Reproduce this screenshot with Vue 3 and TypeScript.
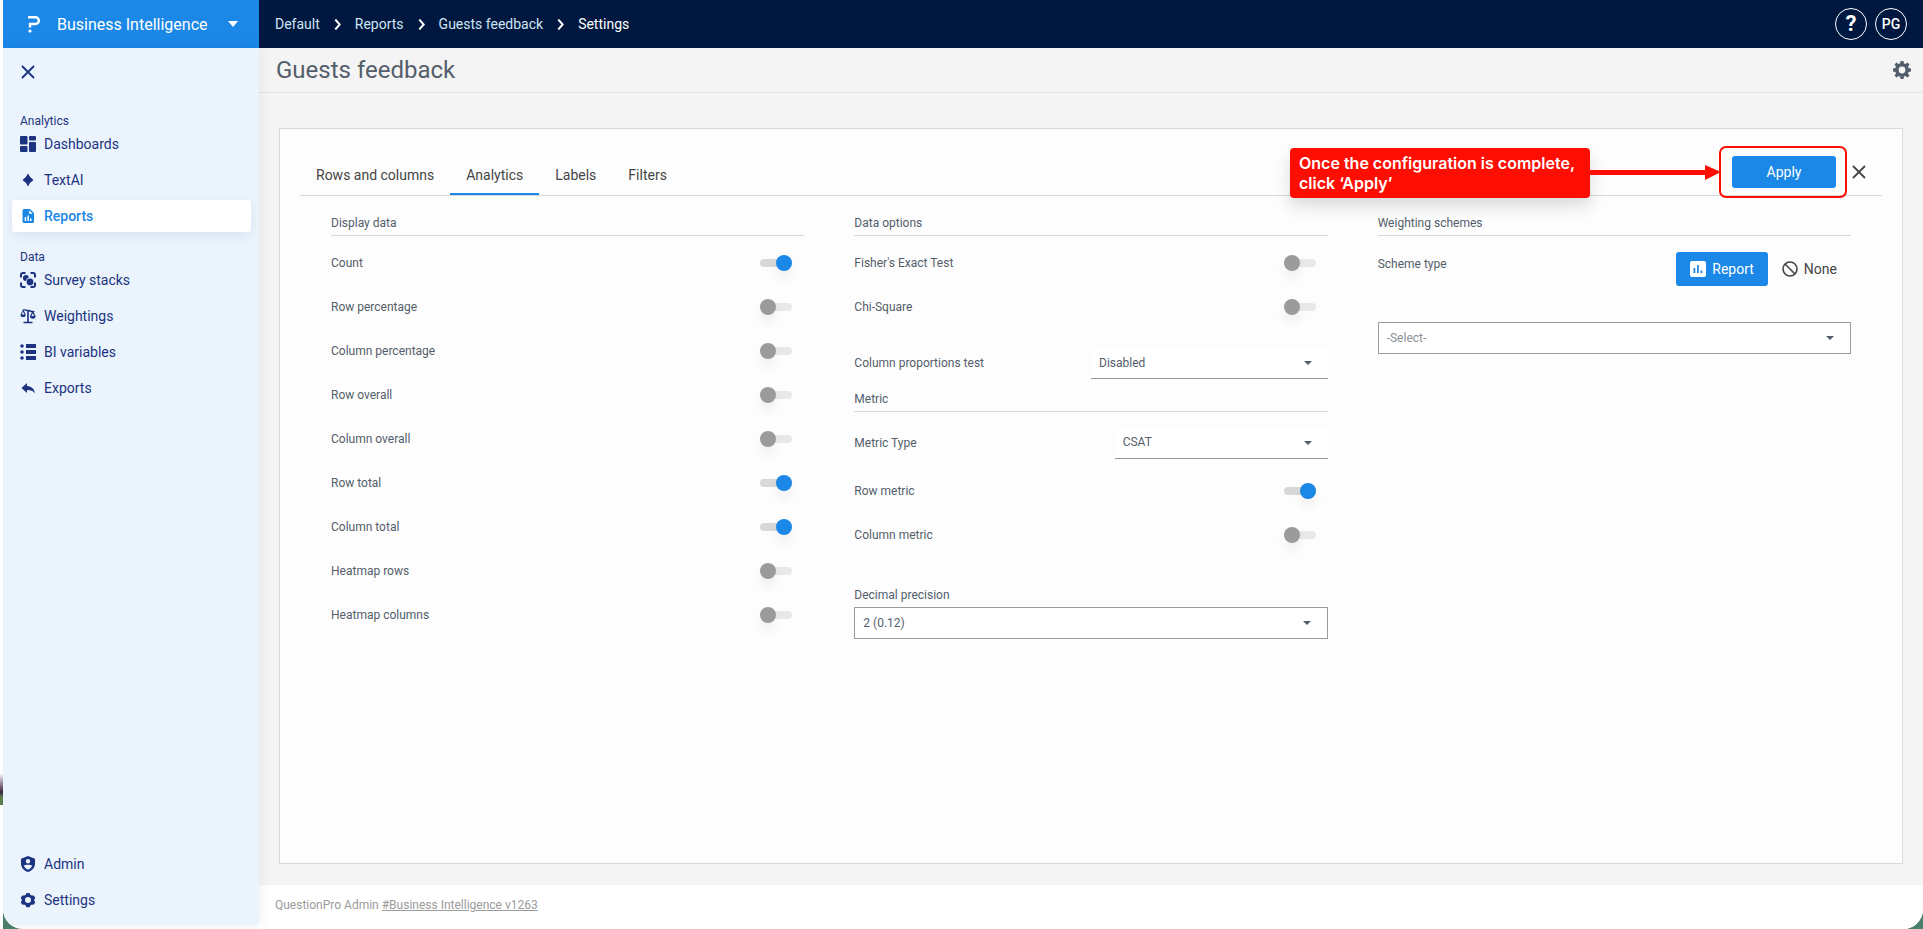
<script setup lang="ts">
import { reactive, ref } from 'vue'

interface NavItem { label: string; icon: string; active?: boolean }
interface Toggle { label: string; on: boolean }

const analyticsNav: NavItem[] = [
  { label: 'Dashboards', icon: 'dashboard' },
  { label: 'TextAI', icon: 'spark' },
  { label: 'Reports', icon: 'report', active: true },
]
const dataNav: NavItem[] = [
  { label: 'Survey stacks', icon: 'stacks' },
  { label: 'Weightings', icon: 'scale' },
  { label: 'BI variables', icon: 'list' },
  { label: 'Exports', icon: 'reply' },
]
const bottomNav: NavItem[] = [
  { label: 'Admin', icon: 'shield' },
  { label: 'Settings', icon: 'gear' },
]
const navGroups = [
  { title: 'Analytics', items: analyticsNav },
  { title: 'Data', items: dataNav },
]

const icons: Record<string, string> = {
  dashboard: 'M1 0h5.500a1 1 0 0 1 1 1v6.500a1 1 0 0 1-1 1H1a1 1 0 0 1-1-1V1a1 1 0 0 1 1-1zM10 0h5a1 1 0 0 1 1 1v2.500a1 1 0 0 1-1 1h-5a1 1 0 0 1-1-1V1a1 1 0 0 1 1-1zM1 10h5.500a1 1 0 0 1 1 1v4a1 1 0 0 1-1 1H1a1 1 0 0 1-1-1v-4a1 1 0 0 1 1-1zM10 6h5a1 1 0 0 1 1 1v8a1 1 0 0 1-1 1h-5a1 1 0 0 1-1-1V7a1 1 0 0 1 1-1z',
  spark: 'M8 1.500Q10 6 13.500 8Q10 10 8 14.500Q6 10 2.500 8Q6 6 8 1.500z',
  report: 'M4 1h6l4 4v8.500a1.500 1.500 0 0 1-1.500 1.500H4a1.500 1.500 0 0 1-1.500-1.500v-11A1.500 1.500 0 0 1 4 1zM9.200 2.300v3.500h3.500zM4.700 9v4h1.500V9zM7.400 7.500V13h1.500V7.500zM10 10.500V13h1.500v-2.500z',
  stacks: 'M3 0h2.500v2H3a1 1 0 0 0-1 1v2.500H0V3a3 3 0 0 1 3-3zM10.500 0H13a3 3 0 0 1 3 3v2.500h-2V3a1 1 0 0 0-1-1h-2.500zM0 10.500h2V13a1 1 0 0 0 1 1h2.500v2H3a3 3 0 0 1-3-3zM14 10.500h2V13a3 3 0 0 1-3 3h-2.500v-2H13a1 1 0 0 0 1-1zM6 3a3 3 0 0 1 3 2.200A4.600 4.600 0 0 0 5.900 9A3 3 0 0 1 6 3zM10 6.500a3.400 3.400 0 1 1 0 6.800a3.400 3.400 0 0 1 0-6.800z',
  scale: 'M7.300 1.800C6.500 1.800 5.500 1.200 4.500 1.200L2.500 1.400v1.100h.3L.5 6.500a2.600 2.600 0 0 0 5.200 0L3.800 2.600c1.500 0 2 .6 3.400.7V13.800H3.500v1.400h9v-1.400H8.800V3.500c1.200.2 2 .8 3.200.8l-2 3.700a2.700 2.700 0 0 0 5.600 0L13.500 4.200h1V3L12 2.800c-1.500-.3-2-.8-3.200-1zM3.100 3.500L4.500 6.400H1.700zM12.800 5.300l1.400 2.800h-2.800z',
  list: 'M2 .2a1.800 1.800 0 1 1 0 3.600a1.800 1.800 0 0 1 0-3.600zM6 0h10v4H6zM2 6.200a1.800 1.800 0 1 1 0 3.600a1.800 1.800 0 0 1 0-3.600zM6 6h10v4H6zM2 12.200a1.800 1.800 0 1 1 0 3.600a1.800 1.800 0 0 1 0-3.600zM6 12h10v4H6z',
  reply: 'M7 3v3c5 .4 7.300 3.200 8 7.400C13.200 10.700 11 10 7 10v3L1.500 8z',
  shield: 'M8 0l7 2.800v4.700c0 4-2.800 7.300-7 8.500c-4.200-1.200-7-4.500-7-8.500V2.800zM8 3a2.200 2.200 0 1 0 0 4.400A2.200 2.200 0 0 0 8 3zM3.800 9.800C4.700 11.800 6.200 13 8 13.700c1.800-.7 3.300-1.900 4.200-3.900C10.500 8.400 5.500 8.400 3.800 9.800z',
  gear: 'M6.500 1h3l.8 1.800l1.500.8l2-.2l1.500 2.600L14.200 7.500v1.200l1.100 1.500l-1.500 2.600l-2-.2l-1.400.8l-.9 1.800h-3l-.9-1.800l-1.400-.8l-2 .2L.700 10.200l1.100-1.500V7.500L.7 6l1.500-2.600l2 .2l1.500-.8zM8 5.100a3 3 0 1 0 0 6a3 3 0 0 0 0-6z',
}

const crumbs = ['Default', 'Reports', 'Guests feedback', 'Settings']
const tabs = ['Rows and columns', 'Analytics', 'Labels', 'Filters']
const activeTab = ref('Analytics')

const displayData = reactive<Toggle[]>([
  { label: 'Count', on: true },
  { label: 'Row percentage', on: false },
  { label: 'Column percentage', on: false },
  { label: 'Row overall', on: false },
  { label: 'Column overall', on: false },
  { label: 'Row total', on: true },
  { label: 'Column total', on: true },
  { label: 'Heatmap rows', on: false },
  { label: 'Heatmap columns', on: false },
])
const tests = reactive<Toggle[]>([
  { label: "Fisher's Exact Test", on: false },
  { label: 'Chi-Square', on: false },
])
const metrics = reactive<Toggle[]>([
  { label: 'Row metric', on: true },
  { label: 'Column metric', on: false },
])
</script>

<template>
  <div class="desktop">
    <div class="backdrop">
      <div class="window">
        <header class="topbar">
          <button class="product" type="button">
            <svg class="logo" viewBox="0 0 14 18" aria-hidden="true">
              <path d="M1 2.300h7.500a3.200 3.200 0 0 1 0 6.700H3v3.500" fill="none" stroke="#fff" stroke-width="2.400" />
              <circle cx="3" cy="16" r="1.600" fill="#fff" />
            </svg>
            <span>Business Intelligence</span>
            <svg class="product-caret" viewBox="0 0 10 6" aria-hidden="true"><path d="M0 0h10L5 6z" fill="#fff" /></svg>
          </button>
          <nav class="crumbs" aria-label="Breadcrumb">
            <template v-for="(crumb, i) in crumbs" :key="crumb">
              <svg v-if="i" class="chevron" viewBox="0 0 6 10" aria-hidden="true">
                <path d="M1 0.500L5 5L1 9.500" fill="none" stroke="#fff" stroke-width="1.800" />
              </svg>
              <a href="#" :class="{ current: i === crumbs.length - 1 }">{{ crumb }}</a>
            </template>
          </nav>
          <div class="account">
            <button class="round help" type="button" aria-label="Help">?</button>
            <button class="round" type="button">PG</button>
          </div>
        </header>

        <div class="body">
          <aside class="sidebar">
            <button class="icon-btn collapse" type="button" aria-label="Close menu">
              <svg viewBox="0 0 14 14"><path d="M1 1l12 12M13 1L1 13" fill="none" stroke="currentColor" stroke-width="1.800" /></svg>
            </button>
            <nav v-for="group in navGroups" :key="group.title" class="nav-group">
              <h2>{{ group.title }}</h2>
              <a v-for="item in group.items" :key="item.label" href="#" :class="['nav-item', { active: item.active }]">
                <svg viewBox="0 0 16 16" aria-hidden="true"><path :d="icons[item.icon]" fill="currentColor" fill-rule="evenodd" /></svg>
                <span>{{ item.label }}</span>
              </a>
            </nav>
            <nav class="nav-group bottom">
              <a v-for="item in bottomNav" :key="item.label" href="#" class="nav-item">
                <svg viewBox="0 0 16 16" aria-hidden="true"><path :d="icons[item.icon]" fill="currentColor" fill-rule="evenodd" /></svg>
                <span>{{ item.label }}</span>
              </a>
            </nav>
          </aside>

          <div class="main">
            <div class="titlebar">
              <h1>Guests feedback</h1>
              <button class="icon-btn gear" type="button" aria-label="Report settings">
                <svg viewBox="0 0 18 18">
                  <path fill="currentColor" fill-rule="evenodd" d="M7.500 0h3l.5 2.500l1.400.6l2.100-1.500l2 2l-1.500 2.100l.6 1.400l2.400.4v3l-2.400.5l-.6 1.400l1.500 2.100l-2 2l-2.100-1.500l-1.400.6l-.5 2.400h-3L7 15.600L5.600 15l-2.100 1.500l-2-2L3 12.400L2.400 11L0 10.500v-3l2.400-.4L3 5.700L1.500 3.600l2-2l2.100 1.500L7 2.500zM9 5.600a3.400 3.400 0 1 0 0 6.800a3.400 3.400 0 0 0 0-6.800z" />
                </svg>
              </button>
            </div>

            <main class="content">
              <section class="card">
                <div class="tabbar">
                  <div class="tabs" role="tablist">
                    <button
                      v-for="tab in tabs" :key="tab" type="button" role="tab"
                      :aria-selected="tab === activeTab" :class="['tab', { active: tab === activeTab }]"
                      @click="activeTab = tab"
                    >{{ tab }}</button>
                  </div>
                  <div class="actions">
                    <div class="apply-wrap">
                      <div class="callout">
                        <p>Once the configuration is complete,<br />click ‘Apply’</p>
                        <svg class="arrow" viewBox="0 0 131 16" aria-hidden="true">
                          <path d="M0 5h115V0l16 7l-16 8v-5H0z" fill="#fe0d02" />
                        </svg>
                      </div>
                      <button class="apply" type="button">Apply</button>
                    </div>
                    <button class="icon-btn close" type="button" aria-label="Close settings">
                      <svg viewBox="0 0 14 14"><path d="M1 1l12 12M13 1L1 13" fill="none" stroke="currentColor" stroke-width="1.800" /></svg>
                    </button>
                  </div>
                </div>

                <div class="columns">
                  <div class="column">
                    <h3>Display data</h3>
                    <label v-for="t in displayData" :key="t.label" class="row">
                      <span>{{ t.label }}</span><input v-model="t.on" class="switch" type="checkbox" />
                    </label>
                  </div>

                  <div class="column">
                    <h3>Data options</h3>
                    <label v-for="t in tests" :key="t.label" class="row">
                      <span>{{ t.label }}</span><input v-model="t.on" class="switch" type="checkbox" />
                    </label>
                    <div class="row proportions">
                      <label for="proportions">Column proportions test</label>
                      <div class="select line half">
                        <select id="proportions"><option>Disabled</option></select>
                        <svg viewBox="0 0 8 4" aria-hidden="true"><path d="M0 0h8L4 4z" /></svg>
                      </div>
                    </div>
                    <h3>Metric</h3>
                    <div class="row metric-type">
                      <label for="metric-type">Metric Type</label>
                      <div class="select line narrow">
                        <select id="metric-type"><option>CSAT</option></select>
                        <svg viewBox="0 0 8 4" aria-hidden="true"><path d="M0 0h8L4 4z" /></svg>
                      </div>
                    </div>
                    <label v-for="t in metrics" :key="t.label" class="row">
                      <span>{{ t.label }}</span><input v-model="t.on" class="switch" type="checkbox" />
                    </label>
                    <label class="precision-label" for="precision">Decimal precision</label>
                    <div class="select boxed">
                      <select id="precision"><option>2 (0.12)</option></select>
                      <svg viewBox="0 0 8 4" aria-hidden="true"><path d="M0 0h8L4 4z" /></svg>
                    </div>
                  </div>

                  <div class="column">
                    <h3>Weighting schemes</h3>
                    <div class="scheme">
                      <span class="scheme-label">Scheme type</span>
                      <div class="scheme-options">
                        <button class="option selected" type="button">
                          <svg viewBox="0 0 16 16" aria-hidden="true">
                            <path fill="#fff" fill-rule="evenodd" d="M2 0h12a2 2 0 0 1 2 2v12a2 2 0 0 1-2 2H2a2 2 0 0 1-2-2V2a2 2 0 0 1 2-2zM3.500 7v5h1.800V7zM7 4v8h1.800V4zM10.500 9.500V12h1.800V9.500z" />
                          </svg>
                          Report
                        </button>
                        <button class="option" type="button">
                          <svg viewBox="0 0 16 16" aria-hidden="true">
                            <g fill="none" stroke="#454545" stroke-width="1.600"><circle cx="8" cy="8" r="7" /><path d="M3 3l10 10" /></g>
                          </svg>
                          None
                        </button>
                      </div>
                    </div>
                    <div class="select boxed placeholder">
                      <select aria-label="Weighting scheme"><option>-Select-</option></select>
                      <svg viewBox="0 0 8 4" aria-hidden="true"><path d="M0 0h8L4 4z" /></svg>
                    </div>
                  </div>
                </div>
              </section>
            </main>

            <footer class="footer">QuestionPro Admin <a href="#">#Business Intelligence v1263</a></footer>
          </div>
        </div>
      </div>
    </div>
  </div>
</template>

<style>
body { margin: 0; background: #fff; }
</style>

<style scoped>
* { box-sizing: border-box; }
.desktop {
  display: flex;
  min-height: 100vh;
  padding-left: 3px;
  background: linear-gradient(#fff, #3d2440 60%, #5c7d4c 75%) left bottom 124px / 3px 32px no-repeat #fff;
  font-family: Roboto, "Noto Sans", sans-serif;
  font-size: 12px;
  color: #545e6b;
}
.backdrop { flex: 1; display: flex; min-width: 0; background: #4a7f69; }
.window {
  flex: 1;
  display: flex;
  flex-direction: column;
  min-width: 0;
  overflow: hidden;
  border-radius: 0 0 20px 20px;
  background: #fff;
}
button { font: inherit; border: 0; background: none; padding: 0; cursor: pointer; }
a { color: inherit; text-decoration: none; }
h1, h2, h3, p { margin: 0; font-weight: 400; }
svg { display: block; flex: none; }

.topbar { display: flex; align-items: center; height: 48px; background: #00173f; color: #fff; }
.product {
  display: flex;
  align-items: center;
  width: 256px;
  height: 48px;
  padding: 0 21px 0 24px;
  background: #1b87e6;
  color: #fff;
  font-size: 16px;
}
.logo { width: 14px; height: 18px; margin-right: 16px; }
.product-caret { width: 10px; height: 6px; margin-left: auto; }
.crumbs { display: flex; align-items: center; gap: 14px; padding-left: 16px; font-size: 14px; line-height: 18px; color: #cfe5f5; }
.crumbs .current { color: #fff; }
.chevron { width: 7px; height: 11px; }
.account { display: flex; gap: 8px; margin-left: auto; padding-right: 16px; }
.round {
  width: 32px;
  height: 32px;
  border: 1px solid #fff;
  border-radius: 50%;
  color: #fff;
  font-size: 14px;
  font-weight: 500;
}
.help { font-size: 22px; font-weight: 700; line-height: 28px; }

.body { flex: 1; display: flex; }
.sidebar {
  display: flex;
  flex-direction: column;
  width: 256px;
  flex: none;
  margin-bottom: 4px;
  padding: 0 8px 9px 9px;
  background: #ebf3fc;
  box-shadow: 2px 0 12px rgba(0, 0, 0, 0.06);
  color: #1b3380;
  z-index: 1;
}
.icon-btn { display: flex; align-items: center; justify-content: center; width: 32px; height: 32px; }
.icon-btn svg { width: 14px; height: 14px; }
.collapse { margin: 8px 0 25px; color: #1b3380; }
.nav-group { display: flex; flex-direction: column; gap: 4px; padding-bottom: 17px; }
.nav-group h2 { height: 11px; padding-left: 8px; font-size: 12px; line-height: 16px; }
.nav-item {
  display: flex;
  align-items: center;
  gap: 8px;
  height: 32px;
  padding-left: 8px;
  border-radius: 3px;
  font-size: 14px;
}
.nav-item svg { width: 16px; height: 16px; }
.nav-item.active {
  background: #fff;
  color: #1b87e6;
  font-weight: 500;
  box-shadow: 0 4px 12px rgba(27, 51, 128, 0.08);
}
.bottom { margin-top: auto; padding-bottom: 0; }

.main { flex: 1; display: flex; flex-direction: column; min-width: 0; background: #f4f4f4; }
.titlebar {
  display: flex;
  align-items: center;
  justify-content: space-between;
  height: 45px;
  padding: 0 5px 0 17px;
  border-bottom: 1px solid #e4e4e4;
}
.titlebar h1 { font-size: 24px; line-height: 32px; }
.gear { color: #545e6b; }
.gear svg { width: 18px; height: 18px; }
.content { flex: 1; display: flex; padding: 35px 20px 21px; }
.card { flex: 1; min-width: 0; padding: 12px 20px; border: 1px solid #d8d9da; background: #fdfdfd; }

.tabbar { display: flex; justify-content: space-between; height: 55px; border-bottom: 1px solid #d8d9da; }
.tabs { display: flex; align-items: flex-end; }
.tab {
  height: 42px;
  padding: 3px 16px 0;
  border-bottom: 2px solid transparent;
  color: #454545;
  font-size: 14px;
}
.tab.active { border-bottom-color: #1b87e6; }
.actions { display: flex; align-items: center; padding: 8px 11px 0 0; }
.apply-wrap { position: relative; padding: 8px 9px 8px 11px; border: 2px solid #fe0d02; border-radius: 7px; }
.apply { display: block; width: 104px; height: 32px; border-radius: 3px; background: #1b87e6; color: #fff; font-size: 14px; }
.close { width: 24px; color: #454545; }
.callout { position: absolute; top: 0; right: 100%; display: flex; align-items: center; }
.callout p {
  width: 300px;
  padding: 5px 9px;
  border-radius: 4px;
  background: #fe0d02;
  box-shadow: 0 8px 16px rgba(0, 0, 0, 0.14);
  color: #fff;
  font: 600 16px/20px Inter, "Liberation Sans", sans-serif;
  white-space: nowrap;
}
.arrow { width: 131px; height: 16px; }

.columns { display: grid; grid-template-columns: repeat(3, minmax(0, 1fr)); gap: 50px; padding: 16px 31px 0; }
.column h3 { height: 24px; border-bottom: 1px solid #d8d9da; font-size: 12px; line-height: 22px; }
.row { display: flex; align-items: center; justify-content: space-between; height: 44px; padding-right: 12px; }
.column > h3 + .row { margin-top: 5px; }
.switch {
  position: relative;
  width: 32px;
  height: 16px;
  margin: 0;
  appearance: none;
}
.switch::before { content: ""; position: absolute; inset: 4px 0; border-radius: 4px; background: #e8e8e8; }
.switch::after {
  content: "";
  position: absolute;
  top: 0;
  left: 0;
  width: 16px;
  height: 16px;
  border-radius: 50%;
  background: #9b9b9b;
  box-shadow: 0 8px 12px rgba(0, 0, 0, 0.06);
}
.switch:checked::before { background: #d8d8d8; }
.switch:checked::after { left: 16px; background: #1b87e6; }

.select { position: relative; }
.select select {
  display: block;
  width: 100%;
  height: 32px;
  padding: 0 8px;
  appearance: none;
  border: 0;
  border-bottom: 1px solid #9b9b9b;
  border-radius: 0;
  background: #fff;
  color: #545e6b;
  font: inherit;
}
.select svg { position: absolute; top: 50%; right: 16px; width: 8px; height: 4px; margin-top: -2px; fill: #545e6b; pointer-events: none; }
.half { width: 50%; }
.narrow { width: 45%; }
.boxed select { border: 1px solid #9b9b9b; }
.boxed svg { right: 17px; }
.placeholder select { color: #8b8f96; }
.proportions { height: 59px; padding: 9px 0 0; }
.column > h3 + .metric-type { height: 53px; margin-top: 4px; padding: 0; }
.precision-label { display: block; margin-top: 28px; padding-bottom: 2px; line-height: 20px; }

.scheme { display: flex; justify-content: space-between; padding-top: 16px; }
.scheme-label { line-height: 24px; }
.scheme-options { display: flex; }
.option { display: flex; align-items: center; gap: 6px; height: 34px; padding: 0 14px; border-radius: 3px; color: #454545; font-size: 14px; }
.option svg { width: 16px; height: 16px; }
.selected { background: #1b87e6; color: #fff; }
.scheme + .select { margin-top: 36px; }

.footer { height: 44px; padding-left: 16px; background: #fff; color: #9b9b9b; font-size: 12px; line-height: 40px; }
.footer a { text-decoration: underline; }
</style>
